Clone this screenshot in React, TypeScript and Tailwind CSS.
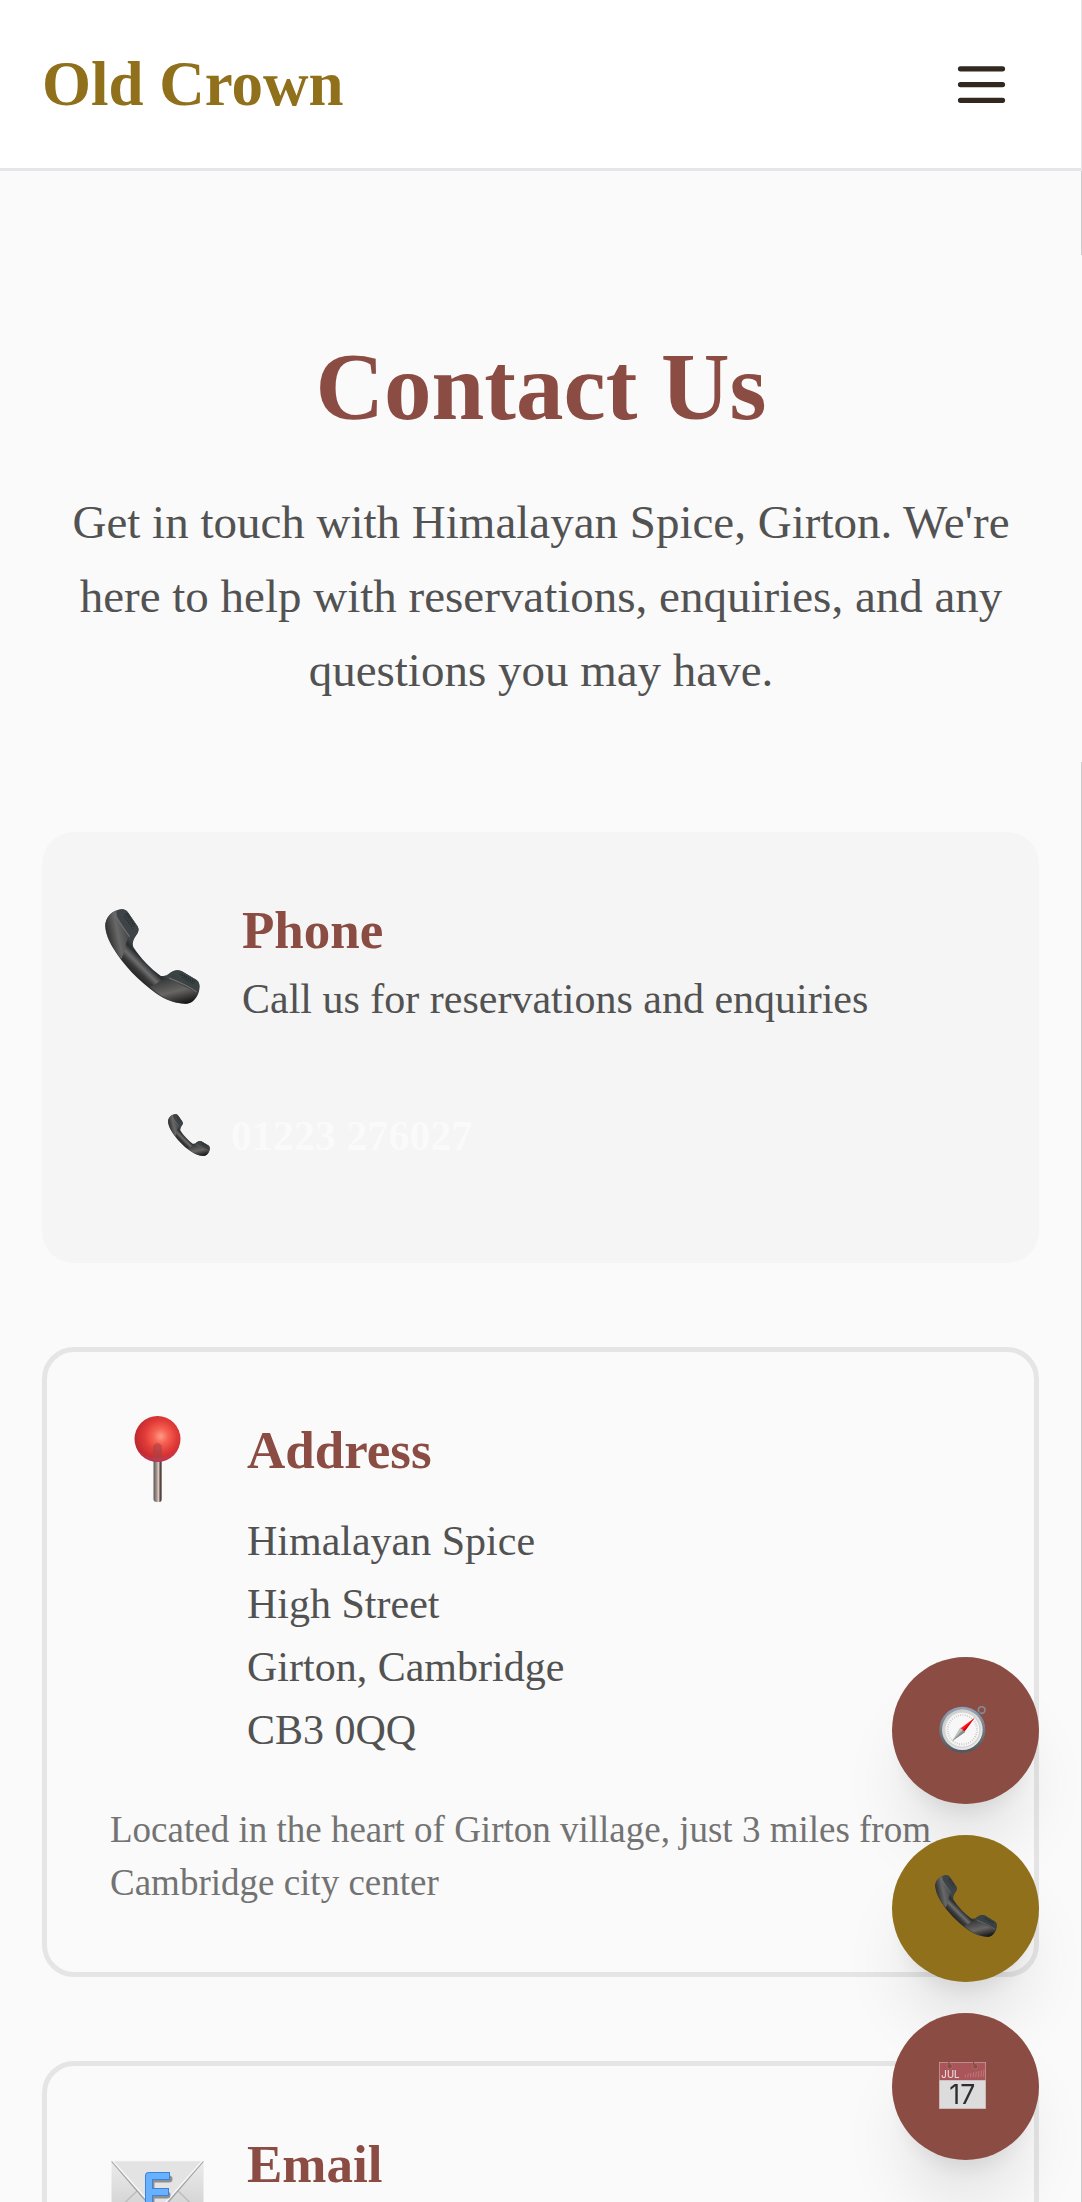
import type { ReactNode } from "react";
import { useId } from "react";

function PhoneIcon({ className }: { className: string }) {
  const id = useId();
  return (
    <svg viewBox="0 0 282 282" className={className} aria-hidden="true">
      <defs>
        <linearGradient id={`${id}b`} gradientUnits="userSpaceOnUse" x1="70" y1="190" x2="140" y2="120">
          <stop offset="0" stopColor="#1c1c1c" />
          <stop offset="0.25" stopColor="#3a3a3a" />
          <stop offset="0.4" stopColor="#6e6e6e" />
          <stop offset="0.58" stopColor="#2b2e30" />
          <stop offset="0.8" stopColor="#474d50" />
          <stop offset="1" stopColor="#3a4042" />
        </linearGradient>
        <linearGradient id={`${id}e`} gradientUnits="userSpaceOnUse" x1="0" y1="60" x2="75" y2="45">
          <stop offset="0" stopColor="#2a2a2a" />
          <stop offset="0.45" stopColor="#686868" />
          <stop offset="1" stopColor="#3a3c3d" />
        </linearGradient>
        <linearGradient id={`${id}m`} gradientUnits="userSpaceOnUse" x1="215" y1="200" x2="235" y2="281">
          <stop offset="0" stopColor="#3a3c3d" />
          <stop offset="0.5" stopColor="#686664" />
          <stop offset="1" stopColor="#151515" />
        </linearGradient>
      </defs>
      <path
        d="M1 50C1 24 22 2 52 1C60 1 65 5 69 11L97 52C102 61 99 69 94 76C86 87 80 99 84 113C106 147 135 177 166 199C180 201 195 190 205 184C211 181 219 181 227 184L272 211C280 217 282 226 280 240C276 262 262 280 240 281C207 281 180 270 150 249C101 215 54 166 24 116C9 91 1 72 1 50Z"
        fill={`url(#${id}b)`}
      />
      <path
        d="M1 50C1 28 18 8 37 4C34 13 38 22 44 32L72 75C67 91 61 101 60 118C57 128 52 140 49 149C30 126 1 80 1 50Z"
        fill={`url(#${id}e)`}
      />
      <path
        d="M132 231C150 226 157 217 170 210C185 207 194 211 204 215L276 249C268 269 257 281 240 281C200 281 167 262 132 231Z"
        fill={`url(#${id}m)`}
      />
      <path d="M37 4C44 1 50 0 56 2C62 3 66 7 69 11L97 52C102 61 99 69 94 76C88 84 84 91 82 100C76 91 74 82 68 72L39 27C35 20 33 12 37 4Z" fill="#3d4346" />
      <path d="M186 195C200 183 212 179 227 184L272 211C280 217 282 226 279 240L276 247C268 238 258 234 248 229L199 207C192 204 185 202 186 195Z" fill="#3b4244" />
      <path d="M31 13C30 23 35 29 40 36L73 82" fill="none" stroke="#6b6f70" strokeWidth="3" />
      <path d="M190 205C217 215 246 228 272 246" fill="none" stroke="#74726f" strokeWidth="3" />
      <g stroke="#25292b" strokeWidth="4" strokeDasharray="3 4" fill="none">
        <path d="M61 14L88 53M66 14L88 47M58 22L83 58" />
        <path d="M222 193L266 218M228 193L268 216M230 203L262 222" />
      </g>
    </svg>
  );
}

function PinIcon({ className }: { className: string }) {
  const id = useId();
  return (
    <svg viewBox="0 0 95 95" className={className} aria-hidden="true">
      <defs>
        <radialGradient id={`${id}h`} cx="0.57" cy="0.44" r="0.62">
          <stop offset="0" stopColor="#ff9c8a" />
          <stop offset="0.25" stopColor="#f76354" />
          <stop offset="0.55" stopColor="#e23c38" />
          <stop offset="0.85" stopColor="#c52b30" />
          <stop offset="1" stopColor="#ad2636" />
        </radialGradient>
        <linearGradient id={`${id}s`} x1="0" x2="1" y1="0" y2="0">
          <stop offset="0" stopColor="#5c5654" />
          <stop offset="0.35" stopColor="#9c928c" />
          <stop offset="0.6" stopColor="#e0cabd" />
          <stop offset="0.8" stopColor="#493a38" />
          <stop offset="1" stopColor="#a09996" />
        </linearGradient>
      </defs>
      <rect x="43.500" y="44" width="8.500" height="43" rx="3" fill={`url(#${id}s)`} />
      <circle cx="47.500" cy="24" r="23" fill={`url(#${id}h)`} />
      <path d="M43 31Q47.500 25 52 31V46Q47.500 48 43 46Z" fill="#a34246" opacity="0.6" />
      <path d="M27 34Q33 46 47.500 47Q62 46 68 34Q60 43 47.500 43Q35 43 27 34Z" fill="#b8437a" opacity="0.4" />
    </svg>
  );
}

function EmailIcon({ className }: { className: string }) {
  const id = useId();
  return (
    <svg viewBox="0 0 95 95" className={className} aria-hidden="true">
      <defs>
        <linearGradient id={`${id}p`} x1="0" x2="0" y1="0" y2="1">
          <stop offset="0" stopColor="#ececec" />
          <stop offset="0.6" stopColor="#d8d8d8" />
          <stop offset="1" stopColor="#d2d2d2" />
        </linearGradient>
      </defs>
      <rect x="1.500" y="17" width="92" height="64" rx="1" fill={`url(#${id}p)`} />
      <path d="M2 72L28 47M93 72L67 47" stroke="#bdbdbd" strokeWidth="1.500" />
      <path d="M2 18L38 60Q47.500 69 57 60L93 18" fill="#e3e3e3" stroke="#a3a4a8" strokeWidth="2" />
      <path d="M2 17L38 58Q47.500 67 57 58L93 17" fill="none" stroke="#f8f8fa" strokeWidth="1.500" />
      <path d="M2 17.500H93" stroke="#f8f8f8" strokeWidth="1.500" />
      <path d="M58 35H40V68H58M40 51H56" transform="translate(1 1)" fill="none" stroke="#8d8f93" strokeWidth="7" strokeLinejoin="round" strokeLinecap="round" />
      <path d="M56 33H39V67H56M39 49H55" fill="none" stroke="#3d82d6" strokeWidth="8" strokeLinejoin="round" strokeLinecap="square" />
      <path d="M56 33H39V67H56M39 49H55" fill="none" stroke="#68b1ff" strokeWidth="6" strokeLinejoin="round" strokeLinecap="square" />
    </svg>
  );
}

function CompassIcon({ className }: { className: string }) {
  const id = useId();
  return (
    <svg viewBox="0 0 141 141" className={className} aria-hidden="true">
      <defs>
        <linearGradient id={`${id}r`} x1="0" x2="0" y1="0" y2="1">
          <stop offset="0" stopColor="#93a4bd" />
          <stop offset="0.45" stopColor="#76808b" />
          <stop offset="1" stopColor="#4c5761" />
        </linearGradient>
        <linearGradient id={`${id}i`} x1="0" x2="1" y1="0" y2="1">
          <stop offset="0" stopColor="#c6c6c2" />
          <stop offset="1" stopColor="#f0f0ee" />
        </linearGradient>
      </defs>
      <circle cx="128" cy="12" r="10" fill="none" stroke="#858a94" strokeWidth="5" />
      <path d="M114 28L122 20" stroke="#596574" strokeWidth="8" />
      <circle cx="70" cy="71" r="69" fill={`url(#${id}r)`} />
      <circle cx="70" cy="71" r="61" fill={`url(#${id}i)`} />
      <circle cx="70" cy="71" r="55" fill="#d4d4d2" />
      <circle cx="70" cy="71" r="51" fill="#f7f7f7" />
      <circle cx="70" cy="71" r="44" fill="none" stroke="#bdbdbd" strokeWidth="6" strokeDasharray="2 4.900" />
      <path d="M64 64L79 78L39 106Z" fill="#bcbfbb" />
      <path d="M72 71L79 78L39 106Z" fill="#8b908c" />
      <path d="M65 67L107 35L77 76Z" fill="#ff1d24" />
      <path d="M71 72L107 35L77 76Z" fill="#d8000e" />
    </svg>
  );
}

function CalendarIcon({ className }: { className: string }) {
  return (
    <svg viewBox="0 0 141 141" className={className} overflow="visible" aria-hidden="true">
      <rect width="141" height="141" fill="#c9a5a1" />
      <rect x="2" y="2" width="137" height="53" fill="#a9555a" />
      <rect x="2" y="55" width="137" height="84" fill="#dcdcdc" />
      <g fill="#8b4d43" stroke="#b7796b" strokeWidth="2">
        <circle cx="32" cy="13" r="8" />
        <circle cx="109" cy="13" r="8" />
      </g>
      <path d="M30 0V8M104 0V8" stroke="#7c4038" strokeWidth="3" />
      <path d="M78 46L80 38M86 46L88 35M94 46L96 33M102 46L104 31M110 46L112 29M118 46L120 27M126 45L128 25M133 44L135 23" stroke="#c58a8d" strokeWidth="2" />
      <text x="7" y="48" fontSize="29" fontFamily="Inter, sans-serif" fontWeight="500" fill="#ead6d6">
        JUL
      </text>
      <text x="70" y="126" fontSize="80" textAnchor="middle" fontFamily="Inter, sans-serif" fill="#2f2f2f">
        17
      </text>
    </svg>
  );
}

function CardTitle({ children }: { children: ReactNode }) {
  return <h2 className="text-[53px] leading-[70px] font-bold text-[#8b4d43]">{children}</h2>;
}

function OutlinedCard({ children }: { children: ReactNode }) {
  return <section className="rounded-[32px] border-5 border-[#e5e5e5] p-[63px]">{children}</section>;
}

function FloatingLink({ href, label, tone, children }: { href: string; label: string; tone: string; children: ReactNode }) {
  return (
    <a
      href={href}
      aria-label={label}
      className={`flex size-[147px] items-center justify-center rounded-full shadow-[0_52px_66px_-13px_rgba(0,0,0,0.1),0_21px_26px_-16px_rgba(0,0,0,0.1)] ${tone}`}
    >
      {children}
    </a>
  );
}

export default function App() {
  return (
    <div className="h-screen overflow-x-hidden overflow-y-auto bg-[#fafafa] font-['Liberation_Serif',serif] text-[42px] leading-[63px] text-[#525252] [scrollbar-width:none]">
      <header className="flex h-[171px] items-center justify-between border-r border-b-3 border-r-[#e4e4e4] border-b-[#e5e5ea] bg-white px-[42px]">
        <a href="#home" className="text-[63px] font-bold text-[#90701a]">
          Old Crown
        </a>
        <button type="button" aria-label="Open menu" className="p-[26px]">
          <svg viewBox="0 0 24 24" className="size-[63px]" fill="none" stroke="#32281f" strokeWidth="2" strokeLinecap="round" aria-hidden="true">
            <path d="M4 6h16M4 12h16M4 18h16" />
          </svg>
        </button>
      </header>

      <main>
        <div className="h-[84px] border-r border-[#cccccc]" />
        <section className="px-[42px] pt-[80px] pb-[55px] text-center">
          <h1 className="text-[95px] leading-[105px] font-bold text-[#8b4d43]">Contact Us</h1>
          <p className="mt-[45px] text-[47px] leading-[74px]">
            Get in touch with Himalayan Spice, Girton. We're here to help with reservations, enquiries, and any questions you may have.
          </p>
        </section>

        <div className="flex flex-col gap-[84px] border-r border-[#cccccc] px-[42px] pt-[70px] pb-[84px]">
          <section className="rounded-[32px] bg-[#f5f5f5] p-[63px]">
            <div className="flex items-start gap-[42px]">
              <PhoneIcon className="mt-[14px] size-[95px] shrink-0" />
              <div>
                <CardTitle>Phone</CardTitle>
                <p className="mt-[3px]">Call us for reservations and enquiries</p>
              </div>
            </div>
            <a href="tel:01223276027" className="mt-[42px] flex items-center gap-[21px] px-[63px] py-[32px] font-bold text-[#fafafa]">
              <PhoneIcon className="mb-[4px] size-[42px] shrink-0" />
              01223 276027
            </a>
          </section>

          <OutlinedCard>
            <div className="flex items-start gap-[42px]">
              <PinIcon className="size-[95px] shrink-0" />
              <div>
                <CardTitle>Address</CardTitle>
                <address className="mt-[25px] not-italic">
                  <p>Himalayan Spice</p>
                  <p>High Street</p>
                  <p>Girton, Cambridge</p>
                  <p>CB3 0QQ</p>
                </address>
              </div>
            </div>
            <p className="mt-[41px] text-[37px] leading-[53px] text-[#737373]">
              Located in the heart of Girton village, just 3 miles from Cambridge city center
            </p>
          </OutlinedCard>

          <OutlinedCard>
            <div className="flex items-start gap-[42px]">
              <EmailIcon className="mt-[14px] size-[95px] shrink-0" />
              <CardTitle>Email</CardTitle>
            </div>
          </OutlinedCard>
        </div>
      </main>

      <nav aria-label="Quick actions" className="fixed right-[43px] bottom-[42px] flex flex-col gap-[31px]">
        <FloatingLink href="#directions" label="Get directions" tone="bg-[#8b4d43]">
          <CompassIcon className="mr-[7px] mb-[3px] size-[47px]" />
        </FloatingLink>
        <FloatingLink href="tel:01223276027" label="Call us" tone="bg-[#90701a]">
          <PhoneIcon className="mb-[5px] size-[62px]" />
        </FloatingLink>
        <FloatingLink href="#book" label="Book a table" tone="bg-[#8b4d43]">
          <CalendarIcon className="mr-[7px] mb-[3px] size-[47px]" />
        </FloatingLink>
      </nav>
    </div>
  );
}
